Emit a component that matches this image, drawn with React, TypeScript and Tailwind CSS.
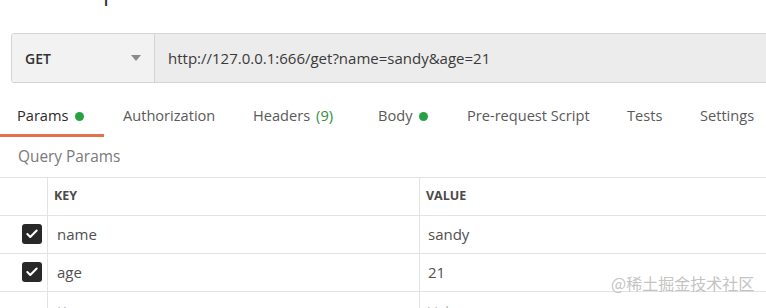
import { Check } from 'lucide-react'

const FONT = "font-['Open_Sans','Noto_Sans',sans-serif]"

type Tab = {
  label: string
  width: string
  active?: boolean
  dot?: boolean
  count?: string
}

const TABS: Tab[] = [
  { label: 'Params', width: 'w-[104px] pl-[17px]', active: true, dot: true },
  { label: 'Authorization', width: 'w-[130px] ml-[19px]' },
  { label: 'Headers', width: 'w-[125px]', count: '(9)' },
  { label: 'Body', width: 'w-[89px]', dot: true },
  { label: 'Pre-request Script', width: 'w-[160px]' },
  { label: 'Tests', width: 'w-[73px]' },
  { label: 'Settings', width: 'w-[80px]' },
]

const ROWS = [
  { key: 'name', value: 'sandy' },
  { key: 'age', value: '21' },
]

function CheckBox() {
  return (
    <div className="flex h-5 w-5 items-center justify-center rounded-[3px] bg-[#282828]">
      <Check className="h-[14px] w-[14px] text-white" strokeWidth={3.5} />
    </div>
  )
}

export default function App() {
  return (
    <div
      className={`relative h-[308px] w-[766px] overflow-hidden bg-white ${FONT}`}
    >
      {/* cut-off title above */}
      <div className="h-[33px] overflow-hidden">
        <div className="-mt-[24px] pl-[103px] text-[24px] leading-[30px] text-[#333]">
          p
        </div>
      </div>

      {/* url bar */}
      <div className="ml-[11px] -mr-[10px] flex h-[50px] rounded-[3px] border border-[#d4d4d4]">
        <div className="flex w-[143px] shrink-0 items-center justify-between rounded-l-[3px] border-r border-[#d4d4d4] bg-[#f2f2f2] pl-[13px] pr-[13px]">
          <span className="text-[14px] font-semibold text-[#333]">GET</span>
          <span className="h-0 w-0 border-x-[5px] border-t-[6px] border-x-transparent border-t-[#8a8a8a]" />
        </div>
        <div className="flex flex-1 items-center bg-[#ececec] pl-[13px] text-[15px] text-[#3a3a3a]">
          http://127.0.0.1:666/get?name=sandy&amp;age=21
        </div>
      </div>

      {/* tabs */}
      <nav className="mt-[14px] flex h-[40px]">
        {TABS.map((tab) => (
          <div
            key={tab.label}
            className={`flex shrink-0 items-center pt-[1px] text-[14.6px] ${tab.width} ${
              tab.active
                ? 'border-b-[3px] border-[#e4704d] text-[#2b2b2b]'
                : 'border-b-[3px] border-transparent text-[#5a5a5a]'
            }`}
          >
            <span>{tab.label}</span>
            {tab.count && (
              <span className="ml-[6px] text-[#2f8f3f]">{tab.count}</span>
            )}
            {tab.dot && (
              <span className="ml-[7px] h-[9px] w-[9px] rounded-full bg-[#27a243]" />
            )}
          </div>
        ))}
      </nav>

      {/* query params */}
      <div className="flex h-[40px] items-center pl-[18px] text-[15.4px] text-[#7a7a7a]">
        Query Params
      </div>

      {/* table */}
      <div className="border-t border-[#e3e3e3]">
        <div className="flex h-[38px] border-b border-[#e3e3e3]">
          <div className="w-[48px] shrink-0 border-r border-[#e3e3e3]" />
          <div className="flex w-[372px] shrink-0 items-center border-r border-[#e3e3e3] pl-[6px] text-[12.5px] font-bold text-[#4a4a4a]">
            KEY
          </div>
          <div className="flex flex-1 items-center pl-[6px] text-[12.5px] font-bold text-[#4a4a4a]">
            VALUE
          </div>
        </div>
        {ROWS.map((row) => (
          <div
            key={row.key}
            className="flex h-[38px] border-b border-[#e3e3e3]"
          >
            <div className="flex w-[48px] shrink-0 items-center justify-end border-r border-[#e3e3e3] pb-[2px] pr-[5px]">
              <CheckBox />
            </div>
            <div className="flex w-[372px] shrink-0 items-center border-r border-[#e3e3e3] pl-[9px] text-[15px] text-[#505050]">
              {row.key}
            </div>
            <div className="flex flex-1 items-center pl-[8px] text-[15px] text-[#505050]">
              {row.value}
            </div>
          </div>
        ))}
        <div className="flex h-[38px]">
          <div className="w-[48px] shrink-0 border-r border-[#e3e3e3]" />
          <div className="flex w-[372px] shrink-0 items-center border-r border-[#e3e3e3] pl-[9px] text-[15px] text-[#b5b5b5]">
            Key
          </div>
          <div className="flex flex-1 items-center pl-[8px] text-[15px] text-[#b5b5b5]">
            Value
          </div>
        </div>
      </div>

      {/* watermark */}
      <div className="absolute left-[611px] top-[272px] font-['Noto_Sans_CJK_SC',sans-serif] text-[16px] leading-[22px] text-[#c4c4c4]">
        @稀土掘金技术社区
      </div>
    </div>
  )
}
